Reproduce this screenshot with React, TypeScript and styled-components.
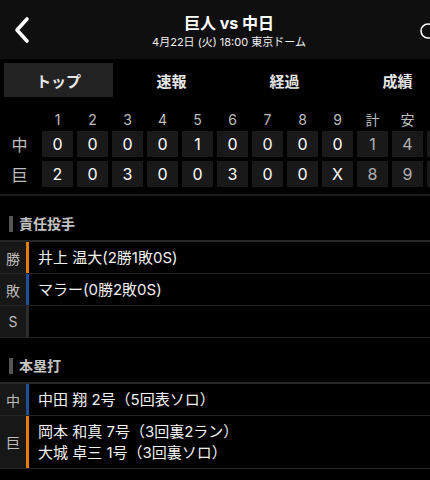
import React from "react";
import styled, { createGlobalStyle } from "styled-components";

const Global = createGlobalStyle`
  html, body { margin: 0; padding: 0; background: #000; }
  body {
    font-family: Inter, "Noto Sans CJK JP", sans-serif;
    color: #fff;
    width: 430px;
    overflow: hidden;
  }
`;

const Page = styled.div`
  width: 430px;
  height: 480px;
  overflow: hidden;
  background: #000;
`;

const Header = styled.header`
  height: 59px;
  background: #0f0f0f;
  display: grid;
  grid-template-columns: 44px 1fr 16px;
  align-items: center;
`;

const BackBtn = styled.div`
  display: flex;
  align-items: center;
  padding-left: 12px;
  height: 100%;
`;

const TitleBlock = styled.div`
  display: flex;
  flex-direction: column;
  align-items: center;
  padding-top: 3px;
`;

const Title = styled.div`
  font-size: 16px;
  font-weight: 700;
  line-height: 22px;
  color: #fff;
`;

const Sub = styled.div`
  font-size: 11px;
  line-height: 15px;
  color: #f0f0f0;
  margin-top: 1px;
`;

const RightIcon = styled.div`
  display: flex;
  justify-content: flex-end;
  align-items: center;
  height: 100%;
  overflow: hidden;
  padding-top: 4px;
`;

const Tabs = styled.nav`
  margin-top: 4px;
  height: 34px;
  display: flex;
  gap: 4px;
  padding-left: 4px;
  overflow: hidden;
`;

const Tab = styled.div<{ $active?: boolean }>`
  flex: 0 0 109px;
  height: 34px;
  display: flex;
  align-items: center;
  justify-content: center;
  font-size: 15px;
  font-weight: 700;
  color: #e6e6e6;
  background: ${(p) => (p.$active ? "#222" : "transparent")};
`;

const Score = styled.section`
  padding: 12px 0 7px;
  border-bottom: 2px solid #1c1c1c;
  overflow: hidden;
  display: flex;
  flex-direction: column;
  gap: 4px;
`;

const ScoreRow = styled.div<{ $head?: boolean }>`
  display: grid;
  grid-template-columns: 38px repeat(12, 31px);
  column-gap: 4px;
  height: ${(p) => (p.$head ? "18px" : "26px")};
`;

const TeamCell = styled.div`
  display: flex;
  align-items: center;
  justify-content: center;
  font-size: 16px;
  color: #bdbdbd;
  padding-left: 1px;
`;

const HeadCell = styled.div`
  display: flex;
  align-items: center;
  justify-content: center;
  font-size: 14px;
  color: #bdbdbd;
`;

const Cell = styled.div<{ $dim?: boolean }>`
  background: #191919;
  display: flex;
  align-items: center;
  justify-content: center;
  font-size: 16px;
  color: ${(p) => (p.$dim ? "#b0b0b0" : "#fff")};
`;

const SectionHead = styled.h2`
  margin: 0;
  padding: 19px 0 8px 9px;
  display: flex;
  align-items: center;
  gap: 6px;
  font-size: 14px;
  line-height: 17px;
  font-weight: 700;
  color: #c4c4c4;
  border-bottom: 2px solid #262626;
  &::before {
    content: "";
    width: 4px;
    height: 16px;
    background: #555;
  }
`;

const Row = styled.div`
  display: grid;
  grid-template-columns: 26px 3px 1fr;
  min-height: 31px;
  border-bottom: 1px solid #242424;
`;

const Label = styled.div`
  background: #171717;
  display: flex;
  align-items: center;
  justify-content: center;
  font-size: 14px;
  color: #bdbdbd;
`;

const Bar = styled.div<{ $color: string }>`
  background: ${(p) => p.$color};
`;

const Body = styled.div`
  padding: 5px 0 5px 9px;
  display: flex;
  flex-direction: column;
  justify-content: center;
  font-size: 15px;
  line-height: 21px;
  color: #f2f2f2;
`;

const ORANGE = "#e27d0e";
const BLUE = "#1f4f96";
const GREY = "#2c2c2c";

const innings = ["1", "2", "3", "4", "5", "6", "7", "8", "9", "計", "安", ""];
const teams = [
  { name: "中", vals: ["0", "0", "0", "0", "1", "0", "0", "0", "0", "1", "4", ""] },
  { name: "巨", vals: ["2", "0", "3", "0", "0", "3", "0", "0", "X", "8", "9", ""] },
];

export default function App() {
  return (
    <Page>
      <Global />
      <Header>
        <BackBtn>
          <svg width="20" height="28" viewBox="0 0 20 28">
            <path d="M15 3 L5 14 L15 25" fill="none" stroke="#fff" strokeWidth="3.6" strokeLinecap="round" strokeLinejoin="round" />
          </svg>
        </BackBtn>
        <TitleBlock>
          <Title>巨人 vs 中日</Title>
          <Sub>4月22日 (火) 18:00 東京ドーム</Sub>
        </TitleBlock>
        <RightIcon>
          <svg width="14" height="20" viewBox="0 0 14 20">
            <circle cx="12" cy="9" r="7" fill="none" stroke="#fff" strokeWidth="1.6" />
          </svg>
        </RightIcon>
      </Header>
      <Tabs>
        <Tab $active>トップ</Tab>
        <Tab>速報</Tab>
        <Tab>経過</Tab>
        <Tab>成績</Tab>
      </Tabs>
      <Score>
        <ScoreRow $head>
          <div />
          {innings.map((n, i) => (
            <HeadCell key={i}>{n}</HeadCell>
          ))}
        </ScoreRow>
        {teams.map((t) => (
          <ScoreRow key={t.name}>
            <TeamCell>{t.name}</TeamCell>
            {t.vals.map((v, i) => (
              <Cell key={i} $dim={i >= 9}>
                {v}
              </Cell>
            ))}
          </ScoreRow>
        ))}
      </Score>
      <SectionHead>責任投手</SectionHead>
      <Row>
        <Label>勝</Label>
        <Bar $color={ORANGE} />
        <Body>井上 温大(2勝1敗0S)</Body>
      </Row>
      <Row>
        <Label>敗</Label>
        <Bar $color={BLUE} />
        <Body>マラー(0勝2敗0S)</Body>
      </Row>
      <Row>
        <Label>S</Label>
        <Bar $color={GREY} />
        <Body></Body>
      </Row>
      <SectionHead>本塁打</SectionHead>
      <Row>
        <Label>中</Label>
        <Bar $color={BLUE} />
        <Body>中田 翔 2号（5回表ソロ）</Body>
      </Row>
      <Row>
        <Label>巨</Label>
        <Bar $color={ORANGE} />
        <Body>
          <div>岡本 和真 7号（3回裏2ラン）</div>
          <div>大城 卓三 1号（3回裏ソロ）</div>
        </Body>
      </Row>
    </Page>
  );
}
